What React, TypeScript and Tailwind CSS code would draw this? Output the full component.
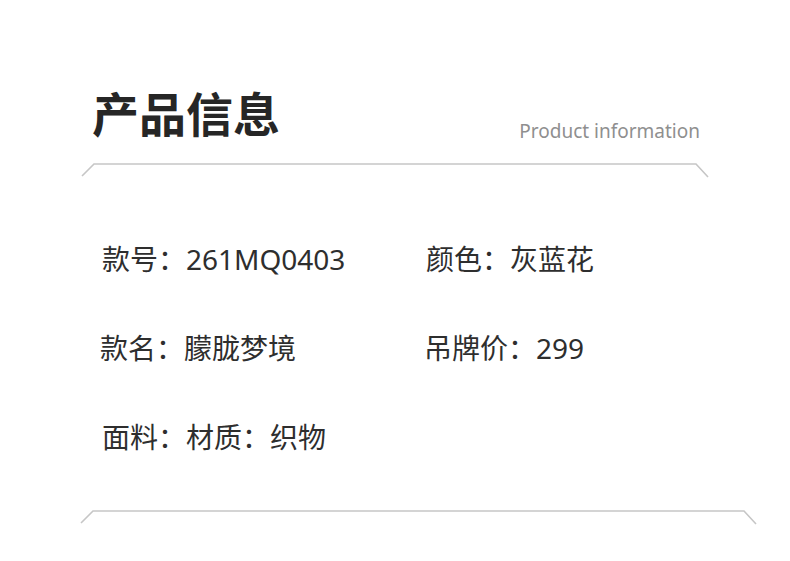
import React from "react";

const cjk = { fontFamily: '"Noto Sans", "Noto Sans CJK SC", sans-serif' };

function Bracket({ x1, x2, top }: { x1: number; x2: number; top: number }) {
  return (
    <svg width="790" height="16" viewBox="0 0 790 16" className="block" style={{ marginTop: top }}>
      <polyline
        points={`${x1},14 ${x1 + 12},2 ${x2 - 12},2 ${x2},15`}
        fill="none"
        stroke="#c6c6c6"
        strokeWidth="1.6"
      />
    </svg>
  );
}

export default function App() {
  return (
    <div className="w-[790px] h-[561px] bg-white overflow-hidden" style={cjk}>
      <div className="pt-[84px] pl-[92px] pr-[90px] flex items-end justify-between">
        <div className="text-[47px] leading-[60px] font-bold text-[#262626]">产品信息</div>
        <div className="text-[19px] leading-[24px] text-[#8f8f8f] mb-[1px]">Product information</div>
      </div>
      <Bracket x1={82} x2={708} top={18} />
      <div className="pl-[102px] pt-[63px] grid grid-cols-[324px_1fr] gap-y-[53px] text-[28px] leading-[36px] text-[#2e2e2e]">
        <div>款号：261MQ0403</div>
        <div>颜色：灰蓝花</div>
        <div className="-ml-[2px]">款名：朦胧梦境</div>
        <div className="-ml-[2px]">吊牌价：299</div>
        <div>面料：材质：织物</div>
        <div></div>
      </div>
      <Bracket x1={81} x2={756} top={54} />
    </div>
  );
}
